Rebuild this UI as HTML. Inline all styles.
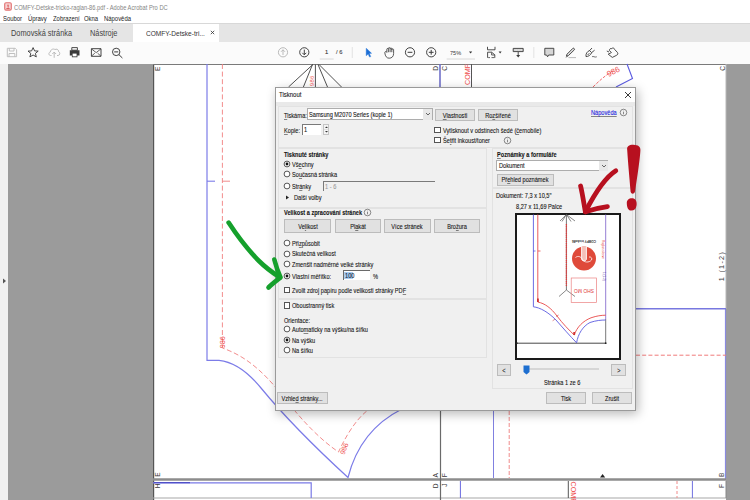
<!DOCTYPE html>
<html><head><meta charset="utf-8">
<style>
*{margin:0;padding:0;box-sizing:border-box}
html,body{width:750px;height:500px;overflow:hidden;background:#fff;font-family:"Liberation Sans",sans-serif;color:#222}
.a{position:absolute;white-space:nowrap}
.btn{background:#e1e1e1;border:1px solid #bcbcbc;text-align:center;color:#151515;-webkit-text-stroke:0.12px currentColor}
.rad{width:6.4px;height:6.4px;border-radius:50%;border:0.9px solid #333;background:#fff}
.chk{width:6.6px;height:6.6px;border:0.8px solid #555;background:#fff}
u{text-decoration:underline;text-decoration-thickness:0.4px;text-underline-offset:0.5px;text-decoration-color:rgba(0,0,0,.45)}
.t{-webkit-text-stroke:0.1px currentColor}
</style></head><body>
<div class="a" style="left:0;top:0;width:750px;height:23px;background:#fff"></div>
<svg class="a" style="left:4px;top:2px" width="8" height="9" viewBox="0 0 8 9"><rect x="0.7" y="0.7" width="6.6" height="7.4" rx="1.3" fill="#f6d2d2" stroke="#e27272" stroke-width="1.1"/><path d="M4 2.6 L4.2 5.6 M2.4 6.6 H5.6" stroke="#d85555" stroke-width="1"/><path d="M3.2 4 C3.6 3 4.6 3 5 4" stroke="#e27272" stroke-width="0.7" fill="none"/></svg>
<div class="a" style="left:14px;top:3.6px;font-size:6.5px;line-height:7px;color:#858585;transform:scaleX(0.88);transform-origin:0 50%">COMFY-Detske-tricko-raglan-86.pdf - Adobe Acrobat Pro DC</div>
<div class="a" style="left:3.4px;top:15.3px;font-size:6.3px;line-height:7px;color:#1a1a1a;transform:scaleX(0.94);transform-origin:0 50%">Soubor</div>
<div class="a" style="left:28.3px;top:15.3px;font-size:6.3px;line-height:7px;color:#1a1a1a;transform:scaleX(0.94);transform-origin:0 50%">Úpravy</div>
<div class="a" style="left:52.8px;top:15.3px;font-size:6.3px;line-height:7px;color:#1a1a1a;transform:scaleX(0.94);transform-origin:0 50%">Zobrazení</div>
<div class="a" style="left:84.3px;top:15.3px;font-size:6.3px;line-height:7px;color:#1a1a1a;transform:scaleX(0.94);transform-origin:0 50%">Okna</div>
<div class="a" style="left:104.3px;top:15.3px;font-size:6.3px;line-height:7px;color:#1a1a1a;transform:scaleX(0.94);transform-origin:0 50%">Nápověda</div>
<div class="a" style="left:0;top:23px;width:750px;height:19px;background:#e5e5e5;border-top:1px solid #d8d8d8"></div>
<div class="a" style="left:133px;top:24px;width:85.6px;height:18px;background:#fff"></div>
<div class="a" style="left:10.9px;top:28.9px;font-size:8.2px;line-height:9px;color:#444;transform:scaleX(0.9);transform-origin:0 50%">Domovská stránka</div>
<div class="a" style="left:89.6px;top:28.9px;font-size:8.2px;line-height:9px;color:#444;transform:scaleX(0.9);transform-origin:0 50%">Nástroje</div>
<div class="a" style="left:145.7px;top:29px;font-size:7.3px;line-height:9px;color:#333;transform:scaleX(0.9);transform-origin:0 50%">COMFY-Detske-tri...</div>
<svg class="a" style="left:210px;top:30.2px" width="5" height="5" viewBox="0 0 5 5"><path d="M0.8 0.8 L4.2 4.2 M4.2 0.8 L0.8 4.2" stroke="#333" stroke-width="0.8"/></svg>
<div class="a" style="left:0;top:42px;width:750px;height:22px;background:#fbfbfb"></div>
<svg class="a" style="left:0;top:42px" width="750" height="21" viewBox="0 42 750 21">
<g fill="none" stroke-linejoin="round">
<!-- save -->
<path d="M7.3 48.3 H15.2 L16.6 49.7 V56.7 H7.3 Z M9.3 48.3 V51 H14 V48.3 M9 56.7 V53.5 H14.8 V56.7" stroke="#b9b9b9" stroke-width="0.9"/>
<!-- star -->
<path d="M33.1 47.6 L34.6 50.9 L38.2 51.1 L35.4 53.4 L36.3 56.9 L33.1 55 L29.9 56.9 L30.8 53.4 L28 51.1 L31.6 50.9 Z" stroke="#3e3e3e" stroke-width="0.95"/>
<!-- cloud -->
<path d="M51.5 55.5 H50.5 C48.5 55.5 48.3 52.3 50.4 52 C50.4 49.6 53.2 48.2 55 49.6 C56 48.6 58.8 49.2 58.6 51.6 C60.3 51.9 60.1 55.5 58.2 55.5 H57 M54.2 57.8 V52.2 M52.3 54 L54.2 52.1 L56.1 54" stroke="#b4b4b4" stroke-width="0.9"/>
<!-- printer -->
<rect x="71.8" y="47.6" width="5.6" height="2.6" stroke="#3a3a3a" stroke-width="0.9"/>
<path d="M69.8 50.3 H79.5 V55.5 H77.4 V57.3 H71.9 V55.5 H69.8 Z" fill="#3a3a3a"/>
<rect x="72.6" y="53.6" width="4" height="2.8" fill="#fff"/>
<!-- mail -->
<rect x="91.4" y="48.7" width="9.6" height="7.6" stroke="#3a3a3a" stroke-width="0.95"/>
<path d="M91.6 49 L96.2 52.6 L100.8 49 M91.6 56 L94.8 53.2 M100.8 56 L97.6 53.2" stroke="#3a3a3a" stroke-width="0.8"/>
<!-- search -->
<circle cx="116.2" cy="51.9" r="3.7" stroke="#3a3a3a" stroke-width="0.95"/>
<path d="M114.2 51.9 H118.2 M118.9 54.6 L122.4 58" stroke="#3a3a3a" stroke-width="1"/>
<!-- up/down -->
<circle cx="283" cy="52.3" r="4.6" stroke="#b3b3b3" stroke-width="0.9"/>
<path d="M283 55 V49.8 M281 51.8 L283 49.8 L285 51.8" stroke="#b3b3b3" stroke-width="0.9"/>
<circle cx="304.3" cy="52.3" r="4.6" stroke="#3a3a3a" stroke-width="0.95"/>
<path d="M304.3 49.6 V54.8 M302.3 52.8 L304.3 54.8 L306.3 52.8" stroke="#3a3a3a" stroke-width="0.95"/>
<line x1="319.8" y1="59" x2="333.7" y2="59" stroke="#d0d0d0" stroke-width="0.8"/>
<line x1="352.3" y1="47" x2="352.3" y2="58" stroke="#dcdcdc" stroke-width="0.8"/>
<!-- cursor -->
<path d="M366.2 48.2 L371.6 53.3 L369.3 53.5 L370.8 56.6 L369.6 57.1 L368.1 54.1 L366.2 55.7 Z" fill="#1d6fd6" stroke="#1d6fd6" stroke-width="0.4"/>
<!-- hand -->
<path d="M384.8 52.8 C384.6 51.4 386.4 51.1 386.8 52.4 V49.3 C386.8 48.2 388.4 48.2 388.4 49.3 V48.4 C388.4 47.3 390.1 47.3 390.1 48.4 V48.7 C390.1 47.7 391.8 47.7 391.8 48.7 V49.6 C391.8 48.7 393.6 48.7 393.6 49.6 V53.6 C393.6 56.6 391.7 58.2 389.2 58.2 C386.8 58.2 385.2 56.4 384.8 52.8 Z M388.4 49.3 V52.2 M390.1 48.4 V52.2 M391.8 48.7 V52.2" stroke="#3e3e3e" stroke-width="0.85"/>
<!-- zoom out/in -->
<circle cx="410" cy="52.3" r="4.6" stroke="#3a3a3a" stroke-width="0.95"/>
<path d="M407.6 52.3 H412.4" stroke="#3a3a3a" stroke-width="1"/>
<circle cx="431.2" cy="52.3" r="4.6" stroke="#3a3a3a" stroke-width="0.95"/>
<path d="M428.8 52.3 H433.6 M431.2 49.9 V54.7" stroke="#3a3a3a" stroke-width="1"/>
<line x1="446.7" y1="59" x2="475" y2="59" stroke="#d0d0d0" stroke-width="0.8"/>
<path d="M469 51.5 H472.2 L470.6 53.5 Z" fill="#333"/>
<!-- fit page -->
<path d="M487.5 46.8 V49.8 H495 V46.8" stroke="#3a3a3a" stroke-width="0.9"/>
<path d="M487.6 57.8 V52.2 H491.6 L494.8 54.8 V57.8" stroke="#3a3a3a" stroke-width="0.9"/>
<path d="M488.2 57.6 H490 M491.5 57.6 H494.4 M491.6 52.4 V55 H494.6" stroke="#3a3a3a" stroke-width="0.8"/>
<path d="M498.6 51.5 H501.6 L500.1 53.5 Z" fill="#333"/>
<!-- icon2 -->
<path d="M513.2 48.4 H523.2 V51.6 H513.2 Z" fill="#cfcfcf" stroke="#3a3a3a" stroke-width="0.9"/>
<path d="M514.6 50 H521.8" stroke="#fff" stroke-width="0.7" stroke-dasharray="1 0.6"/>
<path d="M518.2 52 V56" stroke="#3a3a3a" stroke-width="0.9"/>
<path d="M516.2 55 L518.2 57.4 L520.2 55 Z" fill="#3a3a3a"/>
<line x1="533.8" y1="47" x2="533.8" y2="58" stroke="#dcdcdc" stroke-width="0.8"/>
<!-- comment -->
<path d="M544.8 48.3 H553.8 V55 H548.6 L547.6 56.8 L546.6 55 H544.8 Z" fill="#d6d6d6" stroke="#3a3a3a" stroke-width="0.9"/>
<!-- pen -->
<path d="M566.4 56.2 L567 54.2 L572.9 48.3 C573.6 47.7 575 49 574.4 49.8 L568.4 55.6 Z" fill="#e0e0e0" stroke="#3a3a3a" stroke-width="0.9"/>
<path d="M566.2 57.4 L567.4 56.2" stroke="#3a3a3a" stroke-width="0.9"/>
<path d="M568.5 57.6 H576" stroke="#b0b0b0" stroke-width="0.9"/>
<!-- sign -->
<path d="M586 56.6 C585.6 54 587 51.4 589.6 50.6 L591.6 52.6 C590.8 55.2 588.2 56.6 586 56.6 Z M589.4 50.8 L592 48 M591.5 52.7 L594.6 50.2 M587.6 55 L589.4 53.2" stroke="#3a3a3a" stroke-width="0.9"/>
<path d="M592 56.8 C593.2 55.6 594.4 57.8 596.8 56.8" stroke="#3a3a3a" stroke-width="0.7"/>
<!-- stamp -->
<path d="M609.5 50.6 C609 49 610.6 48.2 611.8 48.6 C612.6 47.6 614.4 48 614.6 49.4 L617.4 52.4 C618.3 53.4 617.8 54.8 616.4 55.4 L612.3 57.4 L608.2 54.2 L611.4 52.6 Z M606.8 51 L609 52" stroke="#3a3a3a" stroke-width="0.9"/>
</g>
</svg>
<div class="a t" style="left:325px;top:49px;font-size:5.8px;line-height:7px;color:#333">1</div>
<div class="a t" style="left:336px;top:49px;font-size:5.8px;line-height:7px;color:#444">/ 6</div>
<div class="a" style="left:450px;top:49.2px;font-size:6.2px;line-height:7px;color:#3a3a3a;transform:scaleX(0.9);transform-origin:0 50%">75%</div>
<div class="a" style="left:0;top:64px;width:8px;height:436px;background:#f1f1f1"></div>
<svg class="a" style="left:1.5px;top:278px" width="5" height="6" viewBox="0 0 5 6"><path d="M1 0.5 L4 3 L1 5.5 Z" fill="#555"/></svg>
<div class="a" style="left:8px;top:63.8px;width:742px;height:437px;background:#9b9b9b"></div>
<div class="a" style="left:153px;top:64px;width:573px;height:436px;background:#fff"></div>

<svg class="a" style="left:0;top:0" width="750" height="500" viewBox="0 0 750 500">
<g fill="none">
<!-- page edges -->
<line x1="153.6" y1="64" x2="153.6" y2="500" stroke="#555" stroke-width="1.2"/>
<line x1="153" y1="64.5" x2="726" y2="64.5" stroke="#7a7a7a" stroke-width="1.2"/>
<line x1="726" y1="64" x2="726" y2="309" stroke="#b8b8b8" stroke-width="1"/>
<line x1="725.5" y1="309" x2="725.5" y2="479" stroke="#8a8ae0" stroke-width="1.2"/>
<line x1="153" y1="479.5" x2="726" y2="479.5" stroke="#8c8c8c" stroke-width="2.6"/>
<line x1="153" y1="498" x2="726" y2="498" stroke="#a8a8a8" stroke-width="1.2"/>
<line x1="726" y1="481" x2="726" y2="498" stroke="#888" stroke-width="1"/>
<!-- tile vertical -->
<line x1="440.5" y1="87" x2="440.5" y2="500" stroke="#6a6a6a" stroke-width="1.2"/>
<line x1="440" y1="64" x2="440" y2="87" stroke="#7070c8" stroke-width="1.6"/>
<line x1="471.5" y1="64" x2="471.5" y2="87" stroke="#555" stroke-width="1"/>
<!-- blue pattern outline -->
<path d="M207 64 L207 360.3 L219 360.3 C235 362 248 372 261 388 C284 416 318 450 348 477.5 C355 450 370 425 402 409" stroke="#7c7ce8" stroke-width="1.2"/>
<line x1="207" y1="181.2" x2="215" y2="181.2" stroke="#7c7ce8" stroke-width="1.1"/>
<!-- red dashed -->
<path d="M222.4 64 L222.4 348 C245 356 262 370 282 395 C300 418 318 438 338.5 452 C345 438 355 420 368 410" stroke="#f08080" stroke-width="0.9" stroke-dasharray="5 2.6"/>
<line x1="222" y1="181.2" x2="230" y2="181.2" stroke="#ef8b8b" stroke-width="1"/>
<!-- fan lines top -->
<g stroke="#3c3c3c" stroke-width="0.9">
<line x1="312.9" y1="64.5" x2="288.5" y2="87"/>
<line x1="312.5" y1="64.5" x2="303.4" y2="87"/>
<line x1="315.4" y1="64.5" x2="315.4" y2="87"/>
<line x1="318" y1="64.5" x2="327.5" y2="87"/>
<line x1="319" y1="64.5" x2="341.5" y2="87"/>
</g>
<!-- top right blue -->
<path d="M627 64 L632.5 78.5 L616 87" stroke="#5b5be0" stroke-width="1.1"/>
<path d="M593 87 C600 80 606 75 614 70" stroke="#ef5b5b" stroke-width="0.9" stroke-dasharray="3 1.5"/>
<!-- right horizontals -->
<line x1="636" y1="308.7" x2="726" y2="308.7" stroke="#7878e0" stroke-width="1.4"/>
<line x1="636" y1="355.2" x2="726" y2="355.2" stroke="#f07a7a" stroke-width="1" stroke-dasharray="4 2.2"/>
<!-- below dialog -->
<line x1="493.5" y1="411" x2="493.5" y2="478" stroke="#8080e0" stroke-width="1"/>
<line x1="509.2" y1="411" x2="509.2" y2="478" stroke="#f08a8a" stroke-width="1" stroke-dasharray="4 2"/>
<!-- lower row -->
<path d="M153 482.8 L311.2 482.8 L311.2 498" stroke="#7a7ae6" stroke-width="1.2"/>
<line x1="154" y1="482.6" x2="190" y2="482.6" stroke="#5050c8" stroke-width="1.4"/>
<line x1="460.4" y1="481" x2="460.4" y2="498" stroke="#6a6ae0" stroke-width="1"/>
<line x1="568.3" y1="481" x2="568.3" y2="498" stroke="#555" stroke-width="1"/>
<line x1="677" y1="481" x2="677" y2="498" stroke="#f08a8a" stroke-width="1" stroke-dasharray="3 2"/>
<line x1="692.4" y1="481" x2="692.4" y2="498" stroke="#7070e0" stroke-width="1"/>
</g>
<path d="M600 477.5 L602.6 474 L605.2 477.5 Z" fill="#222"/>
<g font-family="Liberation Sans" font-size="6.6" fill="#3a3a3a">
<text transform="translate(160.4,66.6) rotate(-90)" text-anchor="end">E</text>
<text transform="translate(160.4,476.8) rotate(-90)">E</text>
<text transform="translate(160.4,483.6) rotate(-90)" text-anchor="end">H</text>
<text transform="translate(438,477.5) rotate(-90)">A</text>
<text transform="translate(447.2,477.3) rotate(-90)">F</text>
<text transform="translate(438,483.5) rotate(-90)" text-anchor="end">D</text>
<text transform="translate(447.2,483.5) rotate(-90)" text-anchor="end">J</text>
<text transform="translate(437.6,65.9) rotate(-90)" text-anchor="end">D</text>
<text transform="translate(447.2,65.9) rotate(-90)" text-anchor="end">C</text>
<text transform="translate(725,66) rotate(-90)" text-anchor="end">C</text>
<text transform="translate(724.4,477) rotate(-90)">B</text>
<text transform="translate(724.4,484) rotate(-90)" text-anchor="end">F</text>
<text transform="translate(724,281.2) rotate(-90)" font-size="7.2" letter-spacing="1.3">1 (1-2)</text>
</g>
<g font-family="Liberation Sans" font-size="7.2" fill="#ee4d4d">
<text transform="translate(469.6,85) rotate(-90)">COMF</text>
<text transform="translate(571.4,481.5) rotate(90)">COMF</text>
<text transform="translate(224.8,348.3) rotate(-90)" font-size="7.3">986</text>
<text transform="translate(344.5,455) rotate(-70)" font-size="7">986</text>
<text transform="translate(608.5,77) rotate(-26)" font-size="8">986</text>
<text transform="translate(314.2,86) rotate(-90)" font-size="5.8" letter-spacing="0.3">986</text>
</g>
</svg>
<div class="a" style="left:275px;top:87px;width:361.00px;height:324.00px;background:#f0f0f0;border:1px solid #9a9a9a;box-shadow:2px 3px 10px rgba(0,0,0,.28)"></div>
<div class="a" style="left:276px;top:88px;width:359.00px;height:14.00px;background:#fff"></div>
<div class="a" style="left:276px;top:102px;width:359.00px;height:4.00px;background:#e9e9e9"></div>
<div class="a t" style="left:279px;top:91.06px;font-size:7.02px;line-height:8.07px;color:#151515;transform:scaleX(0.855);transform-origin:0 50%;">Tisknout</div>
<svg class="a" style="left:624px;top:90.5px" width="8" height="8" viewBox="0 0 8 8"><path d="M1 1 L7 7 M7 1 L1 7" stroke="#222" stroke-width="0.9"/></svg>
<div class="a" style="left:278px;top:106px;width:355.00px;height:41.50px;background:#f0f0f0;border:1px solid #e2e2e2"></div>
<div class="a" style="left:278px;top:148px;width:209.00px;height:59.50px;background:#f0f0f0;border:1px solid #e2e2e2"></div>
<div class="a" style="left:278px;top:207.5px;width:209.00px;height:91.00px;background:#f0f0f0;border:1px solid #e2e2e2"></div>
<div class="a" style="left:278px;top:298.5px;width:209.00px;height:59.00px;background:#f0f0f0;border:1px solid #e2e2e2"></div>
<div class="a" style="left:492px;top:148px;width:141.00px;height:40.00px;background:#f0f0f0;border:1px solid #e2e2e2"></div>
<div class="a" style="left:492px;top:188px;width:141.00px;height:201.00px;background:#f0f0f0;border:1px solid #e2e2e2"></div>
<div class="a t" style="left:284px;top:111.51px;font-size:6.58px;line-height:7.57px;color:#151515;transform:scaleX(0.855);transform-origin:0 50%;"><u>T</u>iskárna:</div>
<div class="a" style="left:307px;top:108px;width:125.50px;height:12.00px;background:#fff;border:1px solid #adadad"></div>
<div class="a" style="left:423px;top:108.5px;width:9.00px;height:11.00px;background:#e8e8e8"></div>
<svg class="a" style="left:424.5px;top:111px" width="6" height="6" viewBox="0 0 6 6"><path d="M1 2 L3 4 L5 2" stroke="#444" stroke-width="0.8" fill="none"/></svg>
<div class="a t" style="left:309px;top:111.21px;font-size:6.58px;line-height:7.57px;color:#151515;transform:scaleX(0.855);transform-origin:0 50%;">Samsung M2070 Series (kopie 1)</div>
<div class="a btn" style="left:435px;top:109px;width:40.00px;height:11.60px"></div>
<div class="a t" style="left:455.0px;top:111.51px;font-size:6.58px;line-height:7.57px;color:#151515;transform:translateX(-50%) scaleX(0.855);transform-origin:50% 50%"><u>V</u>lastnosti</div>
<div class="a btn" style="left:478.2px;top:109px;width:40.00px;height:11.60px"></div>
<div class="a t" style="left:498.20000000000005px;top:111.51px;font-size:6.58px;line-height:7.57px;color:#151515;transform:translateX(-50%) scaleX(0.855);transform-origin:50% 50%">Ro<u>z</u>šířené</div>
<div class="a t" style="left:591px;top:109.31px;font-size:6.58px;line-height:7.57px;color:#1a1add;transform:scaleX(0.855);transform-origin:0 50%;"><u>Nápověda</u></div>
<svg class="a" style="left:619px;top:108.1px" width="9" height="9" viewBox="0 0 9 9"><circle cx="4.5" cy="4.5" r="3.3" stroke="#5a5a5a" stroke-width="0.7" fill="none"/><path d="M4.5 3.9 V6.3" stroke="#5a5a5a" stroke-width="0.7"/><circle cx="4.5" cy="2.9" r="0.4" fill="#5a5a5a"/></svg>
<div class="a t" style="left:284px;top:126.51px;font-size:6.58px;line-height:7.57px;color:#151515;transform:scaleX(0.855);transform-origin:0 50%;"><u>K</u>opie:</div>
<div class="a" style="left:301.7px;top:124.2px;width:19.30px;height:10.60px;background:#fff;border-top:1px solid #7a7a7a;border-left:1px solid #7a7a7a"></div>
<div class="a t" style="left:304px;top:126.31px;font-size:6.58px;line-height:7.57px;color:#151515;transform:scaleX(0.855);transform-origin:0 50%;">1</div>
<div class="a" style="left:322.5px;top:124.2px;width:6.70px;height:10.60px;background:#f4f4f4;border:1px solid #c4c4c4"></div>
<svg class="a" style="left:322.5px;top:124.2px" width="7" height="11" viewBox="0 0 7 11"><path d="M2 4 L3.5 2.5 L5 4 Z M2 7 L3.5 8.5 L5 7 Z" fill="#333"/><line x1="1" y1="5.5" x2="6" y2="5.5" stroke="#ccc" stroke-width="0.5"/></svg>
<div class="a chk" style="left:434.2px;top:126.60px"></div>
<div class="a t" style="left:442.6px;top:126.61px;font-size:6.58px;line-height:7.57px;color:#151515;transform:scaleX(0.855);transform-origin:0 50%;">Vytisknout v odstínech šedé (<u>č</u>ernobíle)</div>
<div class="a chk" style="left:434.2px;top:136.90px"></div>
<div class="a t" style="left:442.6px;top:136.91px;font-size:6.58px;line-height:7.57px;color:#151515;transform:scaleX(0.855);transform-origin:0 50%;">Še<u>t</u>řit inkoust/toner</div>
<svg class="a" style="left:502.5px;top:135.7px" width="9" height="9" viewBox="0 0 9 9"><circle cx="4.5" cy="4.5" r="3.3" stroke="#5a5a5a" stroke-width="0.7" fill="none"/><path d="M4.5 3.9 V6.3" stroke="#5a5a5a" stroke-width="0.7"/><circle cx="4.5" cy="2.9" r="0.4" fill="#5a5a5a"/></svg>
<div class="a t" style="left:284.3px;top:151.23px;font-size:6.55px;line-height:7.53px;font-weight:bold;color:#151515;transform:scaleX(0.855);transform-origin:0 50%;">Tisknuté stránky</div>
<svg class="a" style="left:283.20px;top:160.30px" width="8" height="8" viewBox="0 0 8 8"><circle cx="4" cy="4" r="2.9" fill="#fff" stroke="#3a3a3a" stroke-width="0.85"/><circle cx="4" cy="4" r="1.4" fill="#111"/></svg>
<div class="a t" style="left:291.8px;top:161.01px;font-size:6.58px;line-height:7.57px;color:#151515;transform:scaleX(0.855);transform-origin:0 50%;">Vš<u>e</u>chny</div>
<svg class="a" style="left:283.20px;top:170.20px" width="8" height="8" viewBox="0 0 8 8"><circle cx="4" cy="4" r="2.9" fill="#fff" stroke="#3a3a3a" stroke-width="0.85"/></svg>
<div class="a t" style="left:291.8px;top:170.91px;font-size:6.58px;line-height:7.57px;color:#151515;transform:scaleX(0.855);transform-origin:0 50%;">So<u>u</u>časná stránka</div>
<svg class="a" style="left:283.20px;top:182.30px" width="8" height="8" viewBox="0 0 8 8"><circle cx="4" cy="4" r="2.9" fill="#fff" stroke="#3a3a3a" stroke-width="0.85"/></svg>
<div class="a t" style="left:291.8px;top:183.01px;font-size:6.58px;line-height:7.57px;color:#151515;transform:scaleX(0.855);transform-origin:0 50%;">Str<u>á</u>nky</div>
<div class="a" style="left:322.7px;top:181px;width:112.80px;height:9.80px;background:#f0f0f0;border-top:1px solid #7a7a7a;border-left:1px solid #7a7a7a"></div>
<div class="a t" style="left:325px;top:182.51px;font-size:6.58px;line-height:7.57px;color:#9a9a9a;transform:scaleX(0.855);transform-origin:0 50%;">1 - 6</div>
<svg class="a" style="left:285px;top:195px" width="5" height="5" viewBox="0 0 5 5"><path d="M1 0.5 L4 2.5 L1 4.5 Z" fill="#222"/></svg>
<div class="a t" style="left:294px;top:194.11px;font-size:6.58px;line-height:7.57px;color:#151515;transform:scaleX(0.855);transform-origin:0 50%;">Další volby</div>
<div class="a t" style="left:283.8px;top:209.33px;font-size:6.55px;line-height:7.53px;font-weight:bold;color:#151515;transform:scaleX(0.855);transform-origin:0 50%;">Velikost a zpracování stránek</div>
<svg class="a" style="left:362.5px;top:208.2px" width="9" height="9" viewBox="0 0 9 9"><circle cx="4.5" cy="4.5" r="3.3" stroke="#5a5a5a" stroke-width="0.7" fill="none"/><path d="M4.5 3.9 V6.3" stroke="#5a5a5a" stroke-width="0.7"/><circle cx="4.5" cy="2.9" r="0.4" fill="#5a5a5a"/></svg>
<div class="a btn" style="left:284.3px;top:219px;width:47.00px;height:14.00px"></div>
<div class="a t" style="left:307.8px;top:222.71px;font-size:6.58px;line-height:7.57px;color:#151515;transform:translateX(-50%) scaleX(0.855);transform-origin:50% 50%">Ve<u>l</u>ikost</div>
<div class="a btn" style="left:334.5px;top:219px;width:46.40px;height:14.00px"></div>
<div class="a t" style="left:357.7px;top:222.71px;font-size:6.58px;line-height:7.57px;color:#151515;transform:translateX(-50%) scaleX(0.855);transform-origin:50% 50%">Pl<u>a</u>kát</div>
<div class="a btn" style="left:383.6px;top:219px;width:47.20px;height:14.00px"></div>
<div class="a t" style="left:407.20000000000005px;top:222.71px;font-size:6.58px;line-height:7.57px;color:#151515;transform:translateX(-50%) scaleX(0.855);transform-origin:50% 50%">Více stránek</div>
<div class="a btn" style="left:433.5px;top:219px;width:46.90px;height:14.00px"></div>
<div class="a t" style="left:456.95px;top:222.71px;font-size:6.58px;line-height:7.57px;color:#151515;transform:translateX(-50%) scaleX(0.855);transform-origin:50% 50%">Bro<u>ž</u>ura</div>
<svg class="a" style="left:283.20px;top:239.00px" width="8" height="8" viewBox="0 0 8 8"><circle cx="4" cy="4" r="2.9" fill="#fff" stroke="#3a3a3a" stroke-width="0.85"/></svg>
<div class="a t" style="left:291.8px;top:239.71px;font-size:6.58px;line-height:7.57px;color:#151515;transform:scaleX(0.855);transform-origin:0 50%;">Při<u>z</u>působit</div>
<svg class="a" style="left:283.20px;top:249.70px" width="8" height="8" viewBox="0 0 8 8"><circle cx="4" cy="4" r="2.9" fill="#fff" stroke="#3a3a3a" stroke-width="0.85"/></svg>
<div class="a t" style="left:291.8px;top:250.41px;font-size:6.58px;line-height:7.57px;color:#151515;transform:scaleX(0.855);transform-origin:0 50%;">Skutečná velikost</div>
<svg class="a" style="left:283.20px;top:260.30px" width="8" height="8" viewBox="0 0 8 8"><circle cx="4" cy="4" r="2.9" fill="#fff" stroke="#3a3a3a" stroke-width="0.85"/></svg>
<div class="a t" style="left:291.8px;top:261.01px;font-size:6.58px;line-height:7.57px;color:#151515;transform:scaleX(0.855);transform-origin:0 50%;">Zmenšit nadměrné velké stránky</div>
<svg class="a" style="left:283.20px;top:272.00px" width="8" height="8" viewBox="0 0 8 8"><circle cx="4" cy="4" r="2.9" fill="#fff" stroke="#3a3a3a" stroke-width="0.85"/><circle cx="4" cy="4" r="1.4" fill="#111"/></svg>
<div class="a t" style="left:291.8px;top:272.71px;font-size:6.58px;line-height:7.57px;color:#151515;transform:scaleX(0.855);transform-origin:0 50%;">Vlastní měřítko:</div>
<div class="a" style="left:343px;top:270.3px;width:27.30px;height:10.20px;background:#fff;border-top:1px solid #6a6a6a;border-left:1px solid #6a6a6a"></div>
<div class="a" style="left:344.3px;top:271.8px;width:9.00px;height:7.20px;background:#a9cdf2"></div>
<div class="a t" style="left:344.5px;top:272.31px;font-size:6.58px;line-height:7.57px;color:#10243a;transform:scaleX(0.855);transform-origin:0 50%;">100</div>
<div class="a t" style="left:373px;top:272.71px;font-size:6.58px;line-height:7.57px;color:#151515;transform:scaleX(0.855);transform-origin:0 50%;">%</div>
<div class="a chk" style="left:283.8px;top:286.70px"></div>
<div class="a t" style="left:291.8px;top:286.71px;font-size:6.58px;line-height:7.57px;color:#151515;transform:scaleX(0.855);transform-origin:0 50%;">Zvolit zdroj papíru podle velikosti stránky PD<u>F</u></div>
<div class="a chk" style="left:283.8px;top:302.00px"></div>
<div class="a t" style="left:291.8px;top:302.01px;font-size:6.58px;line-height:7.57px;color:#151515;transform:scaleX(0.855);transform-origin:0 50%;">Oboustranný tisk</div>
<div class="a t" style="left:284px;top:316.71px;font-size:6.58px;line-height:7.57px;color:#151515;transform:scaleX(0.855);transform-origin:0 50%;">Orientace:</div>
<svg class="a" style="left:283.20px;top:325.40px" width="8" height="8" viewBox="0 0 8 8"><circle cx="4" cy="4" r="2.9" fill="#fff" stroke="#3a3a3a" stroke-width="0.85"/></svg>
<div class="a t" style="left:291.8px;top:326.11px;font-size:6.58px;line-height:7.57px;color:#151515;transform:scaleX(0.855);transform-origin:0 50%;">Auto<u>m</u>aticky na výšku/na šířku</div>
<svg class="a" style="left:283.20px;top:336.00px" width="8" height="8" viewBox="0 0 8 8"><circle cx="4" cy="4" r="2.9" fill="#fff" stroke="#3a3a3a" stroke-width="0.85"/><circle cx="4" cy="4" r="1.4" fill="#111"/></svg>
<div class="a t" style="left:291.8px;top:336.71px;font-size:6.58px;line-height:7.57px;color:#151515;transform:scaleX(0.855);transform-origin:0 50%;">Na výšku</div>
<svg class="a" style="left:283.20px;top:346.40px" width="8" height="8" viewBox="0 0 8 8"><circle cx="4" cy="4" r="2.9" fill="#fff" stroke="#3a3a3a" stroke-width="0.85"/></svg>
<div class="a t" style="left:291.8px;top:347.11px;font-size:6.58px;line-height:7.57px;color:#151515;transform:scaleX(0.855);transform-origin:0 50%;">Na šířku</div>
<div class="a t" style="left:496.6px;top:150.73px;font-size:6.55px;line-height:7.53px;font-weight:bold;color:#151515;transform:scaleX(0.855);transform-origin:0 50%;"><u>P</u>oznámky a formuláře</div>
<div class="a" style="left:496px;top:160px;width:112.00px;height:11.00px;background:#fff;border:1px solid #adadad"></div>
<div class="a" style="left:599px;top:160.5px;width:8.50px;height:10.00px;background:#e8e8e8"></div>
<svg class="a" style="left:600.5px;top:162.5px" width="6" height="6" viewBox="0 0 6 6"><path d="M1 2 L3 4 L5 2" stroke="#444" stroke-width="0.8" fill="none"/></svg>
<div class="a t" style="left:498.5px;top:162.21px;font-size:6.58px;line-height:7.57px;color:#151515;transform:scaleX(0.855);transform-origin:0 50%;">Dokument</div>
<div class="a btn" style="left:496.6px;top:174px;width:57.00px;height:11.50px"></div>
<div class="a t" style="left:525.1px;top:176.46px;font-size:6.58px;line-height:7.57px;color:#151515;transform:translateX(-50%) scaleX(0.855);transform-origin:50% 50%">Př<u>e</u>hled poznámek</div>
<div class="a t" style="left:496px;top:191.71px;font-size:6.58px;line-height:7.57px;color:#151515;transform:scaleX(0.855);transform-origin:0 50%;">Dokument: 7,3 x 10,5"</div>
<div class="a t" style="left:516.4px;top:202.71px;font-size:6.58px;line-height:7.57px;color:#151515;transform:scaleX(0.855);transform-origin:0 50%;">8,27 x 11,69 Palce</div>
<div class="a" style="left:515px;top:213px;width:106.00px;height:146.50px;background:#fff;border:2px solid #1a1a1a"></div>
<div class="a btn" style="left:496.6px;top:364.4px;width:14.40px;height:11.60px"></div>
<div class="a t" style="left:503.8px;top:366.91px;font-size:6.58px;line-height:7.57px;color:#151515;transform:translateX(-50%) scaleX(0.855);transform-origin:50% 50%">&lt;</div>
<div class="a" style="left:526px;top:368px;width:73.00px;height:1.60px;background:#d6d6d6"></div>
<svg class="a" style="left:522.5px;top:364.5px" width="7" height="10" viewBox="0 0 7 10"><path d="M0.5 0.5 H6.5 V7 L3.5 9.5 L0.5 7 Z" fill="#1e6fd0"/></svg>
<div class="a btn" style="left:611px;top:364.4px;width:15.00px;height:11.60px"></div>
<div class="a t" style="left:618.5px;top:366.91px;font-size:6.58px;line-height:7.57px;color:#151515;transform:translateX(-50%) scaleX(0.855);transform-origin:50% 50%">&gt;</div>
<div class="a t" style="left:544px;top:379.11px;font-size:6.58px;line-height:7.57px;color:#151515;transform:scaleX(0.855);transform-origin:0 50%;">Stránka 1 ze 6</div>
<div class="a btn" style="left:277px;top:392px;width:50.70px;height:11.60px"></div>
<div class="a t" style="left:302.35px;top:394.51px;font-size:6.58px;line-height:7.57px;color:#151515;transform:translateX(-50%) scaleX(0.855);transform-origin:50% 50%">Vzhle<u>d</u> stránky...</div>
<div class="a btn" style="left:545.7px;top:392px;width:40.30px;height:11.60px"></div>
<div class="a t" style="left:565.85px;top:394.51px;font-size:6.58px;line-height:7.57px;color:#151515;transform:translateX(-50%) scaleX(0.855);transform-origin:50% 50%">Tisk</div>
<div class="a btn" style="left:591.6px;top:392px;width:40.40px;height:11.60px"></div>
<div class="a t" style="left:611.8px;top:394.51px;font-size:6.58px;line-height:7.57px;color:#151515;transform:translateX(-50%) scaleX(0.855);transform-origin:50% 50%">Zrušit</div>
<svg class="a" style="left:0;top:0" width="750" height="500" viewBox="0 0 750 500">
<g fill="none">
<line x1="517" y1="343.2" x2="606" y2="343.2" stroke="#333" stroke-width="0.9"/>
<line x1="605.7" y1="214.5" x2="605.7" y2="319" stroke="#8a6fd0" stroke-width="0.9"/><line x1="605.7" y1="319" x2="605.7" y2="343" stroke="#555" stroke-width="0.8"/>
<path d="M533.4 214.5 V306.8 C540 307.5 548 312 556 320 C563 328 570 336 576.6 342.8 C578 334 583 326 590 322.5 C596 320.5 601 320 605.7 320" stroke="#5a5ae0" stroke-width="0.9"/>
<path d="M537.8 214.5 V302 C545 303.5 551 308 557 316 C563 324 569 330 574.2 335 C577 327 583 321 591 317.8 C597 315.8 601 315.3 605.7 315.2" stroke="#e84848" stroke-width="0.9"/>
<line x1="533" y1="251" x2="535.5" y2="251" stroke="#5a5ae0" stroke-width="0.8"/>
<line x1="538" y1="251" x2="540.5" y2="251" stroke="#e84848" stroke-width="0.8"/>
<line x1="566.4" y1="214.5" x2="566.4" y2="290" stroke="#555" stroke-width="0.8"/>
<line x1="566.4" y1="224" x2="566.4" y2="286" stroke="#e03a3a" stroke-width="1.3" stroke-dasharray="1.5 0.6"/>
<path d="M566.4 214.5 L560 221 M566.4 214.5 L562 221.5 M566.4 214.5 L571 221.5 M566.4 214.5 L575 221 M566.4 290 L559 296.5 M566.4 290 L575 296.5" stroke="#555" stroke-width="0.7"/>
<rect x="571.2" y="278" width="25.2" height="24.6" stroke="#ec8080" stroke-width="0.7"/>
<circle cx="516.8" cy="343.2" r="0.9" fill="#222"/><rect x="537" y="298.5" width="1.8" height="3.5" fill="#d03030"/><rect x="573.3" y="332" width="1.8" height="3" fill="#d03030"/><path d="M556 316.5 L558.6 315 M552.6 320.8 L555 319.2" stroke="#d04040" stroke-width="0.6"/>
<circle cx="605.7" cy="343.2" r="0.9" fill="#222"/>
</g>
<circle cx="584" cy="258.5" r="12" fill="#df4a3a"/>
<path d="M581.6 246.3 V259 C581.6 261.5 586.4 261.5 586.4 259 V246.3" fill="#f4c0b8" stroke="#fff" stroke-width="0.9"/>
<path d="M575.5 257.5 C578 255.5 581 256.5 582.5 259.5 C584 262.5 589 263 591.5 260 C592.5 258.5 591 256.5 589 257" stroke="#fff" stroke-width="0.8" fill="none"/>
<g font-family="Liberation Sans">
<text transform="translate(596,239.6) rotate(180)" font-size="4" font-weight="bold" fill="#222" textLength="24" lengthAdjust="spacingAndGlyphs">COMFY tricko86</text>
<text transform="translate(594,289.2) rotate(180)" font-size="4.6" fill="#e04040" textLength="20" lengthAdjust="spacingAndGlyphs">SHO  MO</text>
<text transform="translate(601.5,240) rotate(90)" font-size="3" fill="#e84848">Raglan sleeve</text>
<text transform="translate(603,272) rotate(90)" font-size="3" fill="#5a3aa0">1 (1-2)</text>
</g>
</svg>

<svg class="a" style="left:0;top:0" width="750" height="500" viewBox="0 0 750 500">
<g fill="none" stroke-linecap="round" stroke-linejoin="round">
<path d="M228.6 222.6 C238 237 249 251 259 261 C266 268 273 273 280 277.5" stroke="#15a02c" stroke-width="4.6"/>
<path d="M274.3 259.5 C276 266 278 272 280.5 277.5 C276 281 272 284 268.5 287.5" stroke="#15a02c" stroke-width="4.6"/>
<path d="M615.8 170.8 C606 177 596 191 585.4 211.8" stroke="#b7101f" stroke-width="4.8"/>
<path d="M580.6 186 C582.5 194 583.8 203 585.4 211.8 C592 209.5 600 207.5 607.4 206.6" stroke="#b7101f" stroke-width="4.8"/>
</g>
<path d="M627.2 150 C626.6 146 629.5 144.6 633.5 144.8 C638 145 640.8 146.5 640.4 150.5 C640 158 637.5 176 635 191.5 C634.3 194.3 631.2 194.5 630.6 191.8 C629.5 178 627.8 160 627.2 150 Z" fill="#b7101f"/>
<path d="M626.8 203 C626.8 199.5 629.5 197.8 632.6 198.2 C635.8 198.6 637 201.5 636.6 205 C636.2 208.8 634 210.8 631 210.6 C628.2 210.4 626.8 207.5 626.8 203 Z" fill="#b7101f"/>
</svg>

</body></html>
